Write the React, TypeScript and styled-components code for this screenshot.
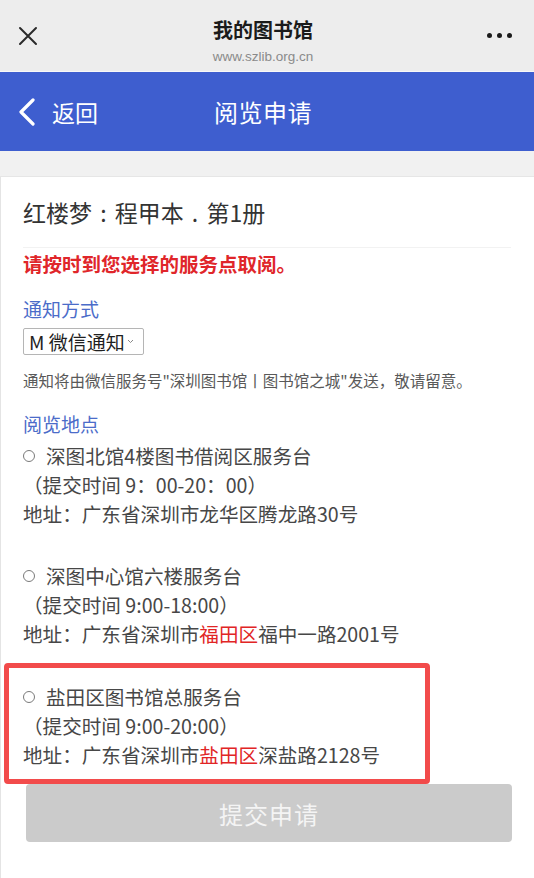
import styled, { createGlobalStyle } from 'styled-components';

const GlobalStyle = createGlobalStyle`
  * {
    box-sizing: border-box;
  }
  body {
    margin: 0;
    background: #ffffff;
    font-family: "Noto Sans CJK SC", "Noto Sans", "Liberation Sans", sans-serif;
  }
`;

const Screen = styled.div`
  width: 534px;
  min-height: 878px;
  background: #ffffff;
  overflow: hidden;
  display: flex;
  flex-direction: column;
`;

const TopBar = styled.header`
  height: 72px;
  background: #ededed;
  border-bottom: 1px solid #f8f8f8;
  display: grid;
  grid-template-columns: 1fr auto 1fr;
  align-items: center;
  padding: 0 8px 0 0;
`;

const IconButton = styled.div<{ $align: 'start' | 'end' }>`
  display: flex;
  justify-content: ${(p) => (p.$align === 'start' ? 'flex-start' : 'flex-end')};
  align-items: center;
  padding: ${(p) => (p.$align === 'start' ? '0 0 0 18px' : '0 14px 0 0')};
  height: 100%;
`;

const TitleBlock = styled.div`
  align-self: start;
  padding-top: 17px;
  display: flex;
  flex-direction: column;
  align-items: center;
`;

const PageTitle = styled.div`
  font-size: 20px;
  font-weight: bold;
  color: #1b1b1b;
  line-height: 26px;
`;

const PageUrl = styled.div`
  font-family: "Liberation Sans", "Noto Sans", sans-serif;
  font-size: 13.5px;
  color: #8a8a8a;
  line-height: 18px;
  margin-top: 5px;
`;

const Dots = styled.div`
  display: flex;
  gap: 5px;
  span {
    width: 5px;
    height: 5px;
    border-radius: 50%;
    background: #1b1b1b;
  }
`;

const NavBar = styled.nav`
  height: 79px;
  background: #3e5ecf;
  display: grid;
  grid-template-columns: 1fr auto 1fr;
  align-items: center;
  padding-right: 8px;
  color: #ffffff;
`;

const BackLink = styled.div`
  display: flex;
  align-items: center;
  gap: 16px;
  padding-left: 18px;
  font-size: 23px;
`;

const NavTitle = styled.div`
  font-size: 24px;
  letter-spacing: 0.5px;
`;

const Band = styled.div`
  height: 26px;
  background: #f1f1f1;
  border-bottom: 1px solid #e6e6e6;
`;

const Card = styled.main`
  flex: 1;
  border-left: 1px solid #e4e4e4;
  padding: 20px 23px 0 22px;
  color: #444444;
`;

const BookTitle = styled.h1`
  margin: 0;
  font-size: 23px;
  font-weight: normal;
  line-height: 30px;
  color: #333333;
  word-spacing: 3px;
`;

const Divider = styled.hr`
  margin: 20px 0 0;
  border: none;
  border-top: 1px solid #f2f2f2;
`;

const Warning = styled.p`
  margin: 3px 0 0;
  font-size: 19.5px;
  line-height: 26px;
  font-weight: bold;
  color: #e0262a;
`;

const SectionLabel = styled.div<{ $gap: number }>`
  margin-top: ${(p) => p.$gap}px;
  font-size: 19px;
  line-height: 26px;
  color: #4b6cc9;
`;

const SelectBox = styled.div`
  margin-top: 6px;
  width: 121px;
  height: 27px;
  border: 1px solid #b5b5b5;
  border-radius: 2px;
  display: flex;
  align-items: center;
  gap: 2px;
  padding-left: 5px;
  font-size: 19px;
  color: #1f1f1f;
  white-space: nowrap;
`;

const Hint = styled.p`
  margin: 14px 0 0;
  font-size: 15.5px;
  line-height: 22px;
  color: #595959;
  white-space: nowrap;
`;

const Option = styled.div<{ $gap: number }>`
  margin-top: ${(p) => p.$gap}px;
  font-size: 19.6px;
  line-height: 29px;
  color: #474747;
  white-space: nowrap;
`;

const OptionName = styled.label`
  display: flex;
  align-items: center;
  gap: 11px;
`;

const Radio = styled.span`
  width: 12px;
  height: 12px;
  border: 1px solid #7a7a7a;
  border-radius: 50%;
  flex-shrink: 0;
`;

const Line = styled.div``;

const Area = styled.span`
  color: #e12525;
`;

const Highlight = styled.div`
  margin: 15px 0 0 -19px;
  width: 426px;
  border: 5px solid #f24b4b;
  border-radius: 4px;
  padding: 14px 0 10px 14px;
`;

const SubmitButton = styled.button`
  display: block;
  width: 486px;
  height: 58px;
  margin: 0 0 36px 3px;
  border: none;
  border-radius: 4px;
  background: #cbcbcb;
  color: #f4f4f4;
  font-family: inherit;
  font-size: 24px;
  letter-spacing: 1px;
`;

type Place = {
  name: string;
  hours: string;
  prefix: string;
  area?: string;
  rest: string;
};

const places: Place[] = [
  {
    name: '深图北馆4楼图书借阅区服务台',
    hours: '（提交时间 9：00-20：00）',
    prefix: '地址：广东省深圳市龙华区腾龙路30号',
    rest: '',
  },
  {
    name: '深图中心馆六楼服务台',
    hours: '（提交时间 9:00-18:00）',
    prefix: '地址：广东省深圳市',
    area: '福田区',
    rest: '福中一路2001号',
  },
  {
    name: '盐田区图书馆总服务台',
    hours: '（提交时间 9:00-20:00）',
    prefix: '地址：广东省深圳市',
    area: '盐田区',
    rest: '深盐路2128号',
  },
];

const PlaceBody = ({ place }: { place: Place }) => (
  <>
    <OptionName>
      <Radio />
      {place.name}
    </OptionName>
    <Line>{place.hours}</Line>
    <Line>
      {place.prefix}
      {place.area && <Area>{place.area}</Area>}
      {place.rest}
    </Line>
  </>
);

const App = () => {
  return (
    <Screen>
      <GlobalStyle />
      <TopBar>
        <IconButton $align="start">
          <svg width="20" height="20" viewBox="0 0 20 20">
            <path d="M2 2 L18 18 M18 2 L2 18" stroke="#2a2a2a" strokeWidth="2" strokeLinecap="round" />
          </svg>
        </IconButton>
        <TitleBlock>
          <PageTitle>我的图书馆</PageTitle>
          <PageUrl>www.szlib.org.cn</PageUrl>
        </TitleBlock>
        <IconButton $align="end">
          <Dots>
            <span />
            <span />
            <span />
          </Dots>
        </IconButton>
      </TopBar>

      <NavBar>
        <BackLink>
          <svg width="18" height="28" viewBox="0 0 18 28">
            <path d="M15 2 L3 14 L15 26" fill="none" stroke="#ffffff" strokeWidth="3.2" strokeLinecap="round" strokeLinejoin="round" />
          </svg>
          返回
        </BackLink>
        <NavTitle>阅览申请</NavTitle>
        <div />
      </NavBar>

      <Band />

      <Card>
        <BookTitle>红楼梦 : 程甲本 . 第1册</BookTitle>
        <Divider />
        <Warning>请按时到您选择的服务点取阅。</Warning>

        <SectionLabel $gap={19}>通知方式</SectionLabel>
        <SelectBox>
          M 微信通知
          <svg width="7" height="5" viewBox="0 0 7 5">
            <path d="M1 1 L3.5 3.5 L6 1" fill="none" stroke="#888" strokeWidth="1" />
          </svg>
        </SelectBox>
        <Hint>通知将由微信服务号"深圳图书馆丨图书馆之城"发送，敬请留意。</Hint>

        <SectionLabel $gap={20}>阅览地点</SectionLabel>
        <Option $gap={4}>
          <PlaceBody place={places[0]} />
        </Option>
        <Option $gap={33}>
          <PlaceBody place={places[1]} />
        </Option>
        <Highlight>
          <Option $gap={0}>
            <PlaceBody place={places[2]} />
          </Option>
        </Highlight>

        <SubmitButton disabled>提交申请</SubmitButton>
      </Card>
    </Screen>
  );
};

export default App;
